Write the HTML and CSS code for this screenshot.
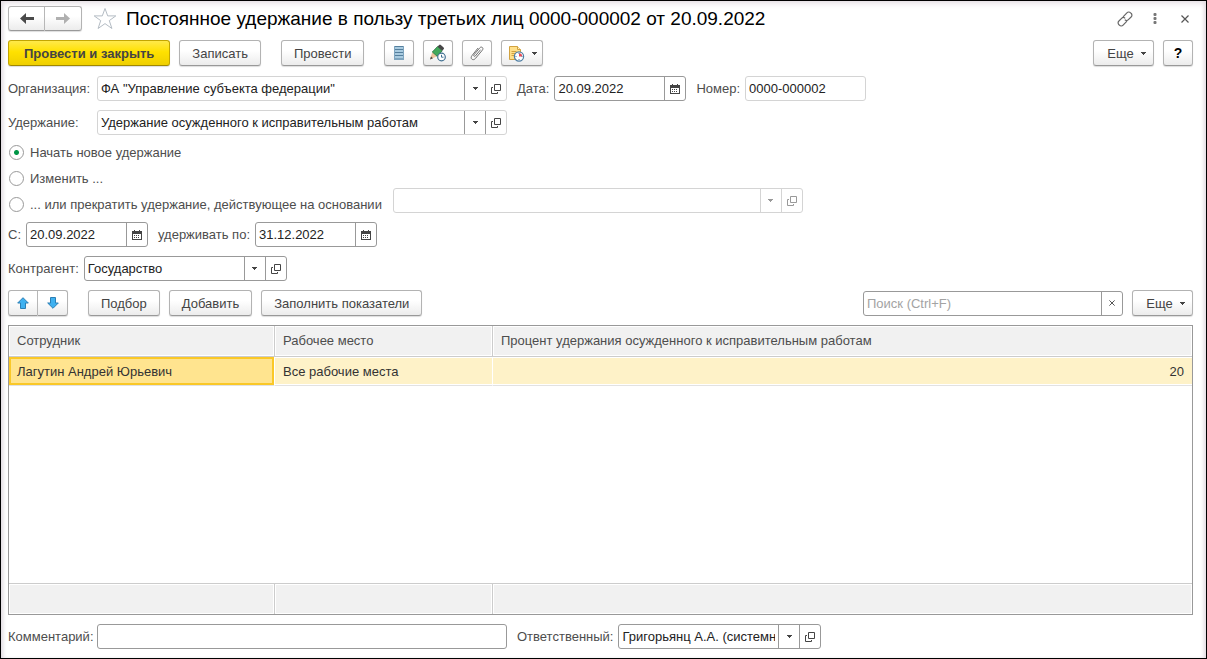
FILE: index.html
```html
<!DOCTYPE html>
<html lang="ru">
<head>
<meta charset="utf-8">
<meta name="viewport" content="width=device-width, initial-scale=1">
<title>Постоянное удержание в пользу третьих лиц</title>
<link rel="stylesheet" href="styles.css">
</head>
<body>
<svg class="sprite" aria-hidden="true">
  <symbol id="i-open" viewBox="0 0 10 10"><path d="M3.500 .5h6v6h-6zM2 3.500H.5v6h6V8" fill="none" stroke="currentColor"/></symbol>
  <symbol id="i-drop" viewBox="0 0 5 3"><path d="M0 0h5v1H4v1H3v1H2V2H1V1H0z" fill="currentColor"/></symbol>
  <symbol id="i-cal" viewBox="0 0 10 10"><path d="M0 1h2V0h1v1h4V0h1v1h2v9H0zM1 4v5h8V4z" fill="currentColor" fill-rule="evenodd"/><path d="M2 5h1v1H2zM4 5h1v1H4zM6 5h1v1H6zM2 7h1v1H2zM4 7h1v1H4zM6 7h1v1H6z" fill="currentColor"/></symbol>
  <symbol id="i-cross" viewBox="0 0 8 8"><path d="M.5 .5l7 7M7.500 .5l-7 7" fill="none" stroke="currentColor" stroke-width="1.200"/></symbol>
</svg>
<main class="form">
  <header class="titlebar">
    <div class="pair">
      <button class="btn nav-btn" type="button" aria-label="Назад"><svg width="14" height="11" viewBox="0 0 14 11"><path d="M0 5.500L6 0v4h8v3H6v4z" fill="#4a4a4a"/></svg></button>
      <button class="btn nav-btn" type="button" aria-label="Вперед"><svg width="14" height="11" viewBox="0 0 14 11"><path d="M14 5.500L8 0v4H0v3h8v4z" fill="#b0b0b0"/></svg></button>
    </div>
    <button class="plain star" type="button" aria-label="В избранное"><svg width="24" height="23" viewBox="0 0 24 23"><path d="M12 1.500l2.700 7.400h8.100l-6.500 4.700 2.600 7.900-6.900-4.900-6.900 4.900 2.600-7.900L1.200 8.900h8.100z" fill="#fff" stroke="#b4bcc4"/></svg></button>
    <h1 class="title">Постоянное удержание в пользу третьих лиц 0000-000002 от 20.09.2022</h1>
    <div class="window-tools">
      <button class="plain" type="button" aria-label="Ссылка"><svg width="16" height="16" viewBox="0 0 16 16" fill="none" stroke="#666" stroke-width="1.200" stroke-linecap="round"><path d="M6.300 5.600l3.600-3.800a2.500 2.500 0 0 1 3.700 0l.5.5a2.500 2.500 0 0 1 0 3.700L11.400 8.700a2.500 2.500 0 0 1-3.200.3M9.700 10.400l-3.600 3.800a2.500 2.500 0 0 1-3.700 0l-.5-.5a2.500 2.500 0 0 1 0-3.700L4.600 7.300A2.500 2.500 0 0 1 7.800 7"/></svg></button>
      <button class="plain" type="button" aria-label="Меню"><svg width="4" height="12" viewBox="0 0 4 12" fill="#777"><rect x=".5" y="0" width="3" height="3" rx="1"/><rect x=".5" y="4" width="3" height="3" rx="1"/><rect x=".5" y="8" width="3" height="3" rx="1"/></svg></button>
      <button class="plain" type="button" aria-label="Закрыть"><svg class="cross" width="8" height="8"><use href="#i-cross"/></svg></button>
    </div>
  </header>

  <div class="bar commands">
    <button class="btn primary" type="button">Провести и закрыть</button>
    <button class="btn group-end" type="button">Записать</button>
    <button class="btn group-end" type="button">Провести</button>
    <button class="btn icon-btn" type="button" aria-label="Движения документа"><svg width="12" height="16" viewBox="0 0 12 16"><path d="M1 1h10v14H1z" fill="#a9cbe0"/><path d="M1 1.500h10M1 4.500h10M1 7.500h10M1 10.500h10M1 14h10" stroke="#557f9d"/><path d="M1.500 1v13.500M10.500 1v13.500" stroke="#7fa5bf"/></svg></button>
    <button class="btn icon-btn" type="button" aria-label="Подписать"><svg width="18" height="18" viewBox="0 0 18 18"><path d="M1 15.500L3.300 8l4.800 4.200z" fill="#efc49d"/><path d="M1 15.500l1-3 2 1.700z" fill="#444"/><path d="M3.300 8L8.500 2.600l4.700 4.200-5.100 5.400z" fill="#44a95c" stroke="#26753d" stroke-width=".8"/><path d="M8.500 2.600l1.700-1.700q.8-.6 1.600.1l2.800 2.600q.8.800.2 1.500l-1.600 1.700z" fill="#474747"/><circle cx="12.500" cy="13" r="3.800" fill="#fff" stroke="#3f6f90" stroke-width="1.200"/><path d="M12.500 10.800v2.400h2" fill="none" stroke="#3f6f90"/></svg></button>
    <button class="btn icon-btn" type="button" aria-label="Присоединенные файлы"><svg width="14" height="16" viewBox="0 0 14 16"><path d="M10.300 5L5.400 10.900c-.9 1.100-2.300 0-1.400-1.100l5.700-6.900c1.700-2 4.400.1 2.700 2.200l-6.900 8.300c-2.500 3-5.900.1-3.500-2.800L7.700 3.400" fill="none" stroke="#707070" stroke-linecap="round"/></svg></button>
    <button class="btn task-btn" type="button" aria-label="Напоминания"><svg width="17" height="17" viewBox="0 0 17 17"><path d="M1.500 1.500h8l3 3v10h-11z" fill="#ffe08a" stroke="#d1a240"/><path d="M9.500 1.500v3h3" fill="#fff1bf" stroke="#d1a240"/><path d="M3.500 6.500h5M3.500 8.500h4M3.500 10.500h3" stroke="#d1a240"/><circle cx="11" cy="11.500" r="4.600" fill="#fff" stroke="#4e7ea3" stroke-width="1.200"/><path d="M11 11.500V8.200a3.300 3.300 0 0 1 3.200 3.300z" fill="#e94b55"/><path d="M11 8v1M11 14v1M7.500 11.500h1M13.500 11.500h1" stroke="#4e7ea3"/></svg><svg class="drop" width="5" height="3"><use href="#i-drop"/></svg></button>
    <button class="btn more push" type="button">Еще<svg class="drop" width="5" height="3"><use href="#i-drop"/></svg></button>
    <button class="btn icon-btn help" type="button">?</button>
  </div>

  <div class="row">
    <label class="lead" for="org">Организация:</label>
    <div class="field pale wide"><input id="org" type="text" value="ФА &quot;Управление субъекта федерации&quot;"><button type="button" aria-label="Выбрать"><svg width="5" height="3"><use href="#i-drop"/></svg></button><button type="button" aria-label="Открыть"><svg width="10" height="10"><use href="#i-open"/></svg></button></div>
    <label class="next" for="date">Дата:</label>
    <div class="field date-long"><input id="date" type="text" value="20.09.2022"><button type="button" aria-label="Календарь"><svg width="10" height="10"><use href="#i-cal"/></svg></button></div>
    <label class="next" for="num">Номер:</label>
    <div class="field pale number"><input id="num" type="text" value="0000-000002"></div>
  </div>

  <div class="row before-options">
    <label class="lead" for="ded">Удержание:</label>
    <div class="field pale wide"><input id="ded" type="text" value="Удержание осужденного к исправительным работам"><button type="button" aria-label="Выбрать"><svg width="5" height="3"><use href="#i-drop"/></svg></button><button type="button" aria-label="Открыть"><svg width="10" height="10"><use href="#i-open"/></svg></button></div>
  </div>

  <div class="options">
    <div class="radios" role="radiogroup" aria-label="Действие">
      <label class="option"><input type="radio" name="action" checked>Начать новое удержание</label>
      <label class="option"><input type="radio" name="action">Изменить ...</label>
      <label class="option"><input type="radio" name="action">... или прекратить удержание, действующее на основании</label>
    </div>
    <div class="field pale disabled wide"><input type="text" aria-label="Документ-основание" disabled><button type="button" aria-label="Выбрать" disabled><svg width="5" height="3"><use href="#i-drop"/></svg></button><button type="button" aria-label="Открыть" disabled><svg width="10" height="10"><use href="#i-open"/></svg></button></div>
  </div>

  <div class="row">
    <label for="from">С:</label>
    <div class="field date"><input id="from" type="text" value="20.09.2022"><button type="button" aria-label="Календарь"><svg width="10" height="10"><use href="#i-cal"/></svg></button></div>
    <label class="next" for="to">удерживать по:</label>
    <div class="field date"><input id="to" type="text" value="31.12.2022"><button type="button" aria-label="Календарь"><svg width="10" height="10"><use href="#i-cal"/></svg></button></div>
  </div>

  <div class="row">
    <label for="party">Контрагент:</label>
    <div class="field medium"><input id="party" type="text" value="Государство"><button type="button" aria-label="Выбрать"><svg width="5" height="3"><use href="#i-drop"/></svg></button><button type="button" aria-label="Открыть"><svg width="10" height="10"><use href="#i-open"/></svg></button></div>
  </div>

  <div class="bar">
    <div class="pair group-end">
      <button class="btn move-btn" type="button" aria-label="Вверх"><svg width="12" height="12" viewBox="0 0 12 12"><path d="M6 .7L11.300 6H8.500v5.500h-5V6H.7z" fill="#3fb1f0" stroke="#2b7fb5"/></svg></button>
      <button class="btn move-btn" type="button" aria-label="Вниз"><svg width="12" height="12" viewBox="0 0 12 12"><path d="M6 11.300L.7 6h2.800V.5h5V6h2.800z" fill="#3fb1f0" stroke="#2b7fb5"/></svg></button>
    </div>
    <button class="btn" type="button">Подбор</button>
    <button class="btn" type="button">Добавить</button>
    <button class="btn" type="button">Заполнить показатели</button>
    <div class="field search push"><input type="text" aria-label="Поиск" placeholder="Поиск (Ctrl+F)"><button type="button" aria-label="Очистить"><svg width="6" height="6"><use href="#i-cross"/></svg></button></div>
    <button class="btn more" type="button">Еще<svg class="drop" width="5" height="3"><use href="#i-drop"/></svg></button>
  </div>

  <div class="grid">
    <table class="table">
      <colgroup><col class="c-person"><col class="c-place"><col></colgroup>
      <thead><tr><th>Сотрудник</th><th>Рабочее место</th><th>Процент удержания осужденного к исправительным работам</th></tr></thead>
      <tbody>
        <tr class="selected"><td class="current">Лагутин Андрей Юрьевич</td><td>Все рабочие места</td><td class="num">20</td></tr>
        <tr class="rest"><td colspan="3"></td></tr>
      </tbody>
      <tfoot><tr><td></td><td></td><td></td></tr></tfoot>
    </table>
  </div>

  <div class="row">
    <label class="lead" for="note">Комментарий:</label>
    <div class="field wide"><input id="note" type="text"></div>
    <label class="next" for="resp">Ответственный:</label>
    <div class="field medium"><input id="resp" type="text" value="Григорьянц А.А. (системный)"><button type="button" aria-label="Выбрать"><svg width="5" height="3"><use href="#i-drop"/></svg></button><button type="button" aria-label="Открыть"><svg width="10" height="10"><use href="#i-open"/></svg></button></div>
  </div>
</main>
</body>
</html>
```
FILE: styles.css
```css
* {
  box-sizing: border-box;
}

body {
  margin: 0;
  color: #4d4d4d;
  background: #fff;
}

body,
button,
input {
  font-family: "Liberation Sans", Arial, sans-serif;
  font-size: 13px;
  line-height: 15px;
}

svg {
  display: block;
  flex: none;
}

.sprite {
  position: absolute;
  width: 0;
  height: 0;
}

.form {
  display: flex;
  flex-direction: column;
  gap: 9px;
  height: 100vh;
  min-height: 480px;
  padding: 5px 13px 9px 7px;
  border: 1px solid #000;
  box-shadow: inset 0 3px 6px -1px #e3dce2, inset 4px 0 5px -3px #d8d2d7, inset -4px 0 5px -3px #d8d2d7;
}

.titlebar,
.bar,
.row {
  display: flex;
  align-items: center;
}

.titlebar {
  height: 25px;
}

.title {
  flex: 1;
  margin: 0 0 0 9px;
  color: #000;
  font-size: 19px;
  font-weight: 400;
  line-height: 24px;
  white-space: nowrap;
}

.plain {
  display: grid;
  place-items: center;
  min-width: 16px;
  height: 24px;
  padding: 0;
  border: 0;
  background: none;
}

.star {
  margin-left: 11px;
}

.window-tools {
  display: flex;
  gap: 14px;
}

.cross {
  color: #555;
}

.btn {
  display: flex;
  align-items: center;
  justify-content: center;
  height: 26px;
  padding: 0 12px;
  border: 1px solid #b3b3b3;
  border-bottom-color: #999;
  border-radius: 3px;
  background: linear-gradient(#fff 40%, #ececec);
  box-shadow: 0 1px 1px #ddd;
  color: #444;
  white-space: nowrap;
}

.primary {
  padding: 0 15px;
  border-color: #c3a600;
  border-bottom-color: #a08800;
  background: linear-gradient(#ffe94a, #ffe100 45%, #efcf00);
  font-weight: 700;
}

.bar {
  gap: 9px;
}

.commands {
  margin-bottom: 1px;
}

.group-end {
  margin-right: 11px;
}

.push {
  margin-left: auto;
}

.icon-btn,
.move-btn {
  width: 30px;
  padding: 0;
}

.task-btn {
  width: 42px;
  padding: 0;
  gap: 7px;
}

.more {
  width: 61px;
  padding: 0 0 0 6px;
  gap: 7px;
}

.help {
  color: #000;
  font-size: 14px;
  font-weight: 700;
}

.pair {
  display: flex;
}

.pair .btn:first-child {
  border-radius: 3px 0 0 3px;
}

.pair .btn:last-child {
  border-left: 0;
  border-radius: 0 3px 3px 0;
}

.nav-btn {
  width: 37px;
  height: 25px;
  padding: 0;
}

.row label {
  white-space: nowrap;
  margin-right: 5px;
}

.row .lead {
  width: 89px;
  margin-right: 0;
}

.row .next {
  margin-left: 10px;
}

.field {
  display: flex;
  min-width: 0;
  height: 25px;
  border: 1px solid #999;
  border-radius: 3px;
  background: #fff;
}

.field input {
  flex: 1;
  min-width: 0;
  padding: 0 3px;
  border: 0;
  background: none;
  color: #222;
}

.field input::placeholder {
  color: #a3a3a3;
}

.field button {
  display: grid;
  place-items: center;
  flex: none;
  width: 21px;
  padding: 0;
  border: 0;
  border-left: 1px solid #999;
  background: none;
  color: #444;
}

.pale {
  border-color: #d4d4d4;
}

.field.disabled button {
  border-color: #d4d4d4;
  color: #999;
}

.wide {
  flex: 0 1 410px;
}

.medium {
  flex: 0 1 203px;
}

.date {
  width: 122px;
}

.date-long {
  width: 132px;
}

.number {
  width: 121px;
}

.search {
  flex: 0 1 260px;
}

.before-options {
  margin-bottom: -5px;
}

.options {
  display: flex;
  align-items: flex-end;
  gap: 11px;
  margin-bottom: -4px;
}

.options .field {
  margin-bottom: 4px;
}

.option {
  display: flex;
  align-items: center;
  height: 26px;
  white-space: nowrap;
}

.option input {
  appearance: none;
  width: 15px;
  height: 15px;
  margin: 0 6px 0 1px;
  border: 1px solid #999;
  border-radius: 50%;
  background: #fff;
}

.option input:checked {
  background: radial-gradient(circle, #009646 2px, #fff 3px);
}

.grid {
  display: grid;
  flex: 1;
  min-height: 0;
}

.table {
  width: 100%;
  height: 100%;
  border: 1px solid #999;
  border-collapse: separate;
  border-spacing: 0;
  table-layout: fixed;
}

.c-person {
  width: 266px;
}

.c-place {
  width: 218px;
}

.table th,
.table td {
  padding: 0 8px;
  text-align: left;
  font-weight: 400;
}

.table th,
.table tfoot td {
  height: 31px;
  border-right: 1px solid #ccc;
  background: #f1f1f1;
  box-shadow: inset 0 0 0 1px #fff;
}

.table th {
  padding-bottom: 2px;
  border-bottom: 1px solid #ccc;
}

.table tfoot td {
  border-top: 1px solid #ccc;
}

.table th:last-child,
.table tfoot td:last-child {
  border-right: 0;
}

.table .selected td {
  height: 29px;
  border-right: 1px solid #fff;
  border-bottom: 1px solid #e2e2e2;
  background: #fef2c8;
  box-shadow: inset 0 1px #fff, inset 0 -1px #fff;
  color: #333;
}

.table .selected .current {
  background: #ffe48f;
  box-shadow: inset 0 0 0 2px #fac828;
}

.table .selected .num {
  border-right: 0;
  text-align: right;
}
```
